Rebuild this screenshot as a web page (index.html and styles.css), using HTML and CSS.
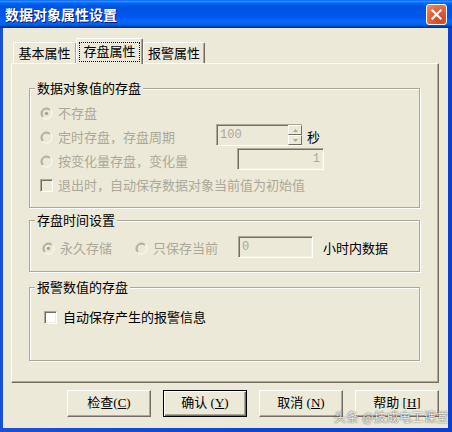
FILE: index.html
```html
<!DOCTYPE html>
<html lang="zh-CN">
<head>
<meta charset="utf-8">
<title>数据对象属性设置</title>
<link rel="stylesheet" href="styles.css">
</head>
<body>
<div class="window">
  <div class="titlebar">
    <span class="title">数据对象属性设置</span>
    <button class="close" aria-label="关闭">
      <svg width="13" height="13" viewBox="0 0 13 13"><path d="M2.5 2.5 L10.5 10.5 M10.5 2.5 L2.5 10.5" stroke="#fff" stroke-width="2.2" stroke-linecap="square"/></svg>
    </button>
  </div>
  <div class="frame">
    <div class="client">
      <div class="tabs">
        <div class="tab tab1">基本属性</div>
        <div class="tab active"><span class="focus">存盘属性</span></div>
        <div class="tab tab3">报警属性</div>
      </div>
      <div class="panel">
        <div class="group g1">
          <div class="group-title">数据对象值的存盘</div>
          <div class="rows">
            <div class="row">
              <svg class="radio" viewBox="0 0 13 13"><circle cx="6.5" cy="6.5" r="5.5" fill="#ece9d8"/><path d="M10.4 2.6 A5.5 5.5 0 0 0 2.6 10.4" stroke="#aca899" fill="none"/><path d="M9.7 3.3 A4.5 4.5 0 0 0 3.3 9.7" stroke="#9c9a8c" fill="none"/><path d="M10.4 2.6 A5.5 5.5 0 0 1 2.6 10.4" stroke="#fff" fill="none"/><circle cx="6.5" cy="6.5" r="1.8" fill="#aca899"/></svg>
              <span class="dis">不存盘</span>
            </div>
            <div class="row">
              <svg class="radio" viewBox="0 0 13 13"><circle cx="6.5" cy="6.5" r="5.5" fill="#ece9d8"/><path d="M10.4 2.6 A5.5 5.5 0 0 0 2.6 10.4" stroke="#aca899" fill="none"/><path d="M9.7 3.3 A4.5 4.5 0 0 0 3.3 9.7" stroke="#9c9a8c" fill="none"/><path d="M10.4 2.6 A5.5 5.5 0 0 1 2.6 10.4" stroke="#fff" fill="none"/></svg>
              <span class="dis lbl-period">定时存盘，存盘周期</span>
              <div class="spin">
                <div class="field spin-field dis mono">100</div>
                <div class="spin-btns">
                  <div class="spin-btn"><svg width="5" height="3" viewBox="0 0 5 3"><path d="M2.5 0 L5 3 L0 3 Z" fill="#aca899"/></svg></div>
                  <div class="spin-btn"><svg width="5" height="3" viewBox="0 0 5 3"><path d="M0 0 L5 0 L2.5 3 Z" fill="#aca899"/></svg></div>
                </div>
              </div>
              <span class="unit">秒</span>
            </div>
            <div class="row">
              <svg class="radio" viewBox="0 0 13 13"><circle cx="6.5" cy="6.5" r="5.5" fill="#ece9d8"/><path d="M10.4 2.6 A5.5 5.5 0 0 0 2.6 10.4" stroke="#aca899" fill="none"/><path d="M9.7 3.3 A4.5 4.5 0 0 0 3.3 9.7" stroke="#9c9a8c" fill="none"/><path d="M10.4 2.6 A5.5 5.5 0 0 1 2.6 10.4" stroke="#fff" fill="none"/></svg>
              <span class="dis lbl-change">按变化量存盘，变化量</span>
              <div class="field change-field dis mono">1</div>
            </div>
            <div class="row">
              <span class="check"></span>
              <span class="dis">退出时，自动保存数据对象当前值为初始值</span>
            </div>
          </div>
        </div>

        <div class="group g2">
          <div class="group-title">存盘时间设置</div>
          <div class="rows">
            <div class="row">
              <svg class="radio" viewBox="0 0 13 13"><circle cx="6.5" cy="6.5" r="5.5" fill="#ece9d8"/><path d="M10.4 2.6 A5.5 5.5 0 0 0 2.6 10.4" stroke="#aca899" fill="none"/><path d="M9.7 3.3 A4.5 4.5 0 0 0 3.3 9.7" stroke="#9c9a8c" fill="none"/><path d="M10.4 2.6 A5.5 5.5 0 0 1 2.6 10.4" stroke="#fff" fill="none"/><circle cx="6.5" cy="6.5" r="1.8" fill="#aca899"/></svg>
              <span class="dis">永久存储</span>
              <svg class="radio radio-second" viewBox="0 0 13 13"><circle cx="6.5" cy="6.5" r="5.5" fill="#ece9d8"/><path d="M10.4 2.6 A5.5 5.5 0 0 0 2.6 10.4" stroke="#aca899" fill="none"/><path d="M9.7 3.3 A4.5 4.5 0 0 0 3.3 9.7" stroke="#9c9a8c" fill="none"/><path d="M10.4 2.6 A5.5 5.5 0 0 1 2.6 10.4" stroke="#fff" fill="none"/></svg>
              <span class="dis">只保存当前</span>
              <div class="field hours-field dis mono">0</div>
              <span class="hours-unit">小时内数据</span>
            </div>
          </div>
        </div>

        <div class="group g3">
          <div class="group-title">报警数值的存盘</div>
          <div class="rows">
            <div class="row">
              <span class="check check-on"></span>
              <span>自动保存产生的报警信息</span>
            </div>
          </div>
        </div>
      </div>

      <div class="buttons">
        <button class="btn">检查<span class="latin">(<u>C</u>)</span></button>
        <button class="btn default">确认<span class="latin"> (<u>Y</u>)</span></button>
        <button class="btn">取消<span class="latin"> (<u>N</u>)</span></button>
        <button class="btn">帮助<span class="latin"> [<u>H</u>]</span></button>
      </div>
    </div>
  </div>
  <div class="watermark">头条 @技成电工课堂</div>
</div>
</body>
</html>
```

FILE: styles.css
```css
* {
  box-sizing: border-box;
}

html,
body {
  margin: 0;
  padding: 0;
}

body {
  width: 452px;
  height: 432px;
  overflow: hidden;
  font-family: "Noto Sans CJK SC", "Noto Sans", sans-serif;
  font-size: 13px;
  line-height: 16px;
  color: #000;
  background: #ece9d8;
}

.window {
  position: relative;
  width: 452px;
  height: 432px;
  display: flex;
  flex-direction: column;
}

.titlebar {
  flex: none;
  height: 28px;
  display: flex;
  align-items: center;
  justify-content: space-between;
  padding: 0 5px;
  background: linear-gradient(to bottom, #0058ee 0%, #3593ff 4%, #288eff 6%, #127dff 8%, #036ffc 10%, #0262ee 14%, #0057e5 20%, #0054e3 24%, #0055eb 56%, #005bf5 66%, #026afe 76%, #0062ef 86%, #0052d6 92%, #0040ab 94%, #003092 100%);
}

.title {
  color: #fff;
  font-weight: bold;
  font-size: 14px;
  line-height: 16px;
  text-shadow: 1px 1px 0 #0a1883;
}

.close {
  width: 21px;
  height: 21px;
  padding: 0;
  margin-top: 1px;
  border: 1px solid #fff;
  border-radius: 3px;
  background: radial-gradient(circle at 70% 75%, #cc4628 0%, #e0603c 50%, #ee9070 100%);
  display: flex;
  align-items: center;
  justify-content: center;
}

.frame {
  flex: 1;
  display: flex;
  padding: 0 4px 4px 3px;
  background: linear-gradient(to right, #1a4fd8, #0a3fd0);
}

.client {
  flex: 1;
  background: #ece9d8;
  padding: 10px 9px 0 8px;
}

/* tabs */
.tabs {
  height: 25px;
  display: flex;
  align-items: flex-end;
  padding-left: 2px;
}

.tab {
  height: 21px;
  border-top: 1px solid #fff;
  border-left: 1px solid #fff;
  border-right: 1px solid #716f64;
  border-radius: 2px 2px 0 0;
  box-shadow: inset -1px 0 0 #aca899;
  text-align: center;
  line-height: 19px;
  background: #ece9d8;
}

.tab1 {
  width: 63px;
  border-right-color: #aca899;
  box-shadow: none;
}

.tab3 {
  width: 62px;
}

.active {
  position: relative;
  z-index: 1;
  width: 67px;
  height: 26px;
  margin-bottom: -1px;
  display: flex;
  justify-content: center;
  padding-top: 3px;
}

.focus {
  width: 61px;
  height: 20px;
  border: 1px dotted #000;
  line-height: 16px;
  text-align: center;
}

/* panel */
.panel {
  height: 320px;
  border: 1px solid;
  border-color: #fff #716f64 #716f64 #fff;
  box-shadow: inset -1px -1px 0 #aca899;
  padding: 24px 0 0 17px;
}

.group {
  width: 391px;
  border: 1px solid #aca899;
  box-shadow: inset 1px 1px 0 #fff, 1px 1px 0 #fff;
}

.group-title {
  width: max-content;
  margin: -9px 0 0 5px;
  padding: 0 2px;
  background: #ece9d8;
  line-height: 16px;
}

.g1 .rows {
  margin-top: 5px;
  padding: 0 0 10px 10px;
}

.g2 {
  margin-top: 12px;
}

.g2 .rows {
  margin-top: 8px;
  padding: 0 0 11px 12px;
}

.g3 {
  margin-top: 15px;
}

.g3 .rows {
  margin-top: 10px;
  padding: 0 0 31px 14px;
}

.row {
  height: 24px;
  display: flex;
  align-items: center;
  white-space: nowrap;
}

.dis {
  color: #aca899;
}

.mono {
  font-family: "Liberation Mono", "Noto Sans CJK SC", monospace;
}

.latin {
  font-family: "Liberation Serif", "Noto Sans CJK SC", serif;
  font-size: 13px;
}

.radio {
  flex: none;
  width: 13px;
  height: 13px;
  margin-right: 5px;
}

.radio-second {
  margin-left: 23px;
}

.check {
  flex: none;
  width: 13px;
  height: 13px;
  margin-right: 5px;
  border: 1px solid;
  border-color: #aca899 #fff #fff #aca899;
  box-shadow: inset 1px 1px 0 #716f64, inset -1px -1px 0 #f1efe2;
  background: #ece9d8;
}

.check-on {
  margin-right: 6px;
  background: #fff;
}

.lbl-period {
  width: 158px;
}

.lbl-change {
  width: 179px;
}

.field {
  height: 22px;
  border: 1px solid;
  border-color: #aca899 #fff #fff #aca899;
  box-shadow: inset 1px 1px 0 #716f64, inset -1px -1px 0 #f1efe2;
  background: #ece9d8;
  font-size: 12px;
  line-height: 20px;
  padding: 0 3px;
}

.spin {
  display: flex;
  width: 86px;
  height: 22px;
  margin-top: -4px;
}

.spin-field {
  width: 72px;
  border-right: none;
  box-shadow: inset 1px 1px 0 #716f64;
}

.spin-btns {
  width: 14px;
  display: flex;
  flex-direction: column;
  border-top: 1px solid #aca899;
  border-bottom: 1px solid #fff;
}

.spin-btn {
  flex: 1;
  display: flex;
  align-items: center;
  justify-content: center;
  border: 1px solid;
  border-color: #fff #716f64 #716f64 #fff;
  background: #ece9d8;
}

.unit {
  margin-left: 5px;
}

.change-field {
  width: 87px;
  margin-top: -4px;
  text-align: right;
}

.hours-field {
  width: 75px;
  margin-left: 20px;
  margin-top: -2px;
}

.hours-unit {
  margin-left: 10px;
}

/* buttons */
.buttons {
  display: flex;
  gap: 12px;
  margin-top: 7px;
  padding-left: 56px;
}

.btn {
  width: 84px;
  height: 27px;
  padding: 0 0 2px;
  font: inherit;
  color: #000;
  background: #ece9d8;
  border: 1px solid;
  border-color: #fff #716f64 #716f64 #fff;
  box-shadow: inset -1px -1px 0 #aca899;
  white-space: pre;
}

.btn u {
  text-underline-offset: 1px;
}

.default {
  border: 1px solid #000;
  box-shadow: inset 1px 1px 0 #fff, inset -1px -1px 0 #716f64, inset -2px -2px 0 #aca899;
}

.watermark {
  position: absolute;
  left: 334px;
  top: 409px;
  font-size: 12px;
  line-height: 15px;
  letter-spacing: 0.5px;
  color: rgba(255, 255, 255, 0.9);
  text-shadow: 0 0 1px rgba(60, 60, 60, 0.9), 0 0 2px rgba(60, 60, 60, 0.5);
  white-space: nowrap;
}
```
